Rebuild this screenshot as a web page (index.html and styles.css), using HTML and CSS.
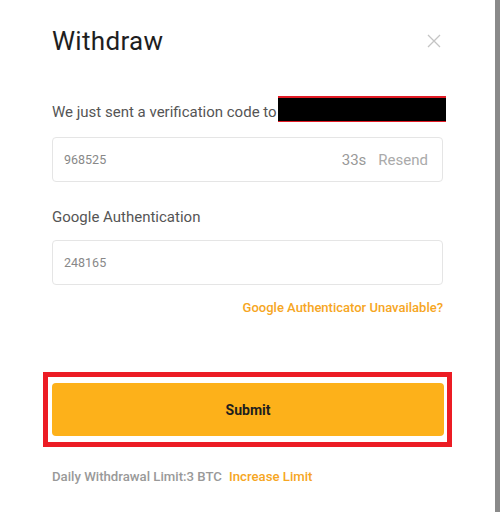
FILE: index.html
```html
<!DOCTYPE html>
<html>
<head>
<meta charset="utf-8">
<link rel="stylesheet" href="styles.css">
</head>
<body>
<div class="page">
  <div class="modal">
    <div class="header">
      <h1 class="title">Withdraw</h1>
      <span class="close">
        <svg width="14" height="14" viewBox="0 0 14 14"><path d="M1 1L13 13M13 1L1 13" stroke="#c4c4c4" stroke-width="1.3" fill="none"/></svg>
      </span>
    </div>
    <div class="sent">
      <span class="sent-text">We just sent a verification code to</span><span class="redact"></span>
    </div>
    <div class="field">
      <span class="val">968525</span>
      <span class="timer">33s</span>
      <span class="resend">Resend</span>
    </div>
    <div class="label">Google Authentication</div>
    <div class="field">
      <span class="val">248165</span>
    </div>
    <div class="unavail"><a>Google Authenticator Unavailable?</a></div>
    <div class="highlight">
      <button class="submit">Submit</button>
    </div>
    <div class="limit">
      <span class="limit-text">Daily Withdrawal Limit:3 BTC</span>
      <a class="increase">Increase Limit</a>
    </div>
  </div>
  <div class="scroll"></div>
</div>
</body>
</html>
```
FILE: styles.css
```css
html, body {
  margin: 0;
  padding: 0;
  background: #fff;
}
body {
  font-family: "Roboto", "Liberation Sans", sans-serif;
}
.page {
  display: flex;
  width: 500px;
  height: 512px;
}
.modal {
  width: 391px;
  padding: 0 52px;
  display: flex;
  flex-direction: column;
}
.scroll {
  width: 5px;
  background: #8a8a8a;
}
.header {
  display: flex;
  justify-content: space-between;
  align-items: center;
  margin-top: 26px;
  height: 30px;
}
.title {
  margin: 0;
  font-size: 26px;
  font-weight: 400;
  color: #1e1e1e;
  letter-spacing: 0.3px;
}
.close {
  display: flex;
  margin-right: 2px;
}
.sent {
  display: flex;
  align-items: flex-end;
  margin-top: 39px;
  height: 27px;
  white-space: nowrap;
}
.sent-text {
  font-size: 15px;
  color: #555;
  padding-bottom: 1px;
}
.redact {
  flex: none;
  width: 168px;
  height: 26px;
  background: #000;
  border-top: 2px solid #e21b25;
  border-bottom: 1px solid #e21b25;
  box-sizing: border-box;
  margin-left: 1px;
}
.field {
  margin-top: 15px;
  height: 45px;
  box-sizing: border-box;
  border: 1px solid #e5e5e5;
  border-radius: 4px;
  display: flex;
  align-items: center;
  padding: 0 14px 0 11px;
}
.val {
  flex: 1;
  font-size: 12.5px;
  color: #888;
}
.timer {
  font-size: 15px;
  color: #999;
  margin-right: 12px;
}
.resend {
  font-size: 15px;
  color: #aaa;
}
.label {
  margin-top: 26px;
  font-size: 15px;
  color: #555;
  height: 18px;
}
.label + .field {
  margin-top: 14px;
}
.unavail {
  display: flex;
  justify-content: flex-end;
  margin-top: 15px;
  font-size: 13px;
  font-weight: 500;
  color: #f6a623;
}
.highlight {
  margin: 57px -9px 0 -9px;
  border: 5px solid #ec1c24;
  padding: 6px 3px 6px 4px;
}
.submit {
  display: block;
  width: 100%;
  height: 53px;
  border: none;
  border-radius: 4px;
  background: #fdb11a;
  font-family: inherit;
  font-size: 14px;
  font-weight: 700;
  color: #1e1e1e;
  padding-top: 2px;
}
.limit {
  margin-top: 22px;
  font-size: 13.2px;
  font-weight: 500;
  color: #999;
  display: flex;
  gap: 7px;
  white-space: nowrap;
}
.increase {
  color: #f6a623;
}
```
